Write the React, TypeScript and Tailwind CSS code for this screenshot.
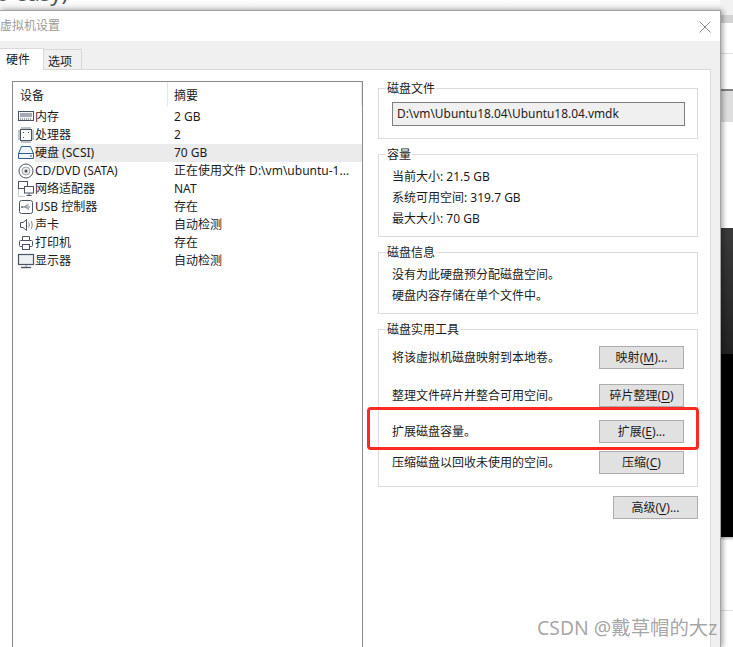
import React from 'react';

const stroke = '#4a5563';

const icons: Record<string, React.ReactNode> = {
  memory: (
    <>
      <rect x="1.5" y="3.5" width="15" height="9" fill="#f4f4f4" stroke={stroke} />
      <path d="M3 6h12M3 8h12" stroke="#8a93a0" strokeWidth="1.4" />
      <path d="M3 11h12" stroke={stroke} strokeDasharray="1 1" />
    </>
  ),
  cpu: (
    <>
      <rect x="3.5" y="3.5" width="11" height="11" fill="#fff" stroke={stroke} />
      <path d="M1 5h2M1 7h2M1 9h2M1 11h2M1 13h2M15 5h2M15 7h2M15 9h2M15 11h2M15 13h2M5 1v2M7 1v2M9 1v2M11 1v2M13 1v2M5 15v2M7 15v2M9 15v2M11 15v2M13 15v2" stroke="#7d8794" />
      <path d="M6 6h1v1H6zM11 6h1v1h-1zM6 11h1v1H6z" fill={stroke} />
    </>
  ),
  disk: (
    <>
      <path d="M4.5 2.5h9l3 7v5h-15v-5z" fill="#eef6fc" stroke="#2f5f8a" />
      <path d="M1.5 9.5h15" stroke="#2f5f8a" />
      <path d="M13 12h2" stroke="#2f5f8a" />
    </>
  ),
  cd: (
    <>
      <circle cx="9" cy="9" r="7" fill="#fff" stroke={stroke} />
      <circle cx="9" cy="9" r="4" fill="#e8e8e8" stroke="#a0a7b0" />
      <circle cx="9" cy="9" r="1.5" fill={stroke} />
    </>
  ),
  network: (
    <>
      <path d="M1.5 9.5v7h7" fill="none" stroke="#8a93a0" strokeDasharray="1 1" />
      <rect x="1.5" y="1.5" width="9" height="7" fill="#fff" stroke={stroke} />
      <rect x="7.5" y="6.5" width="9" height="6.5" fill="#fff" stroke={stroke} />
      <path d="M12 13v2M9.5 15.5h5" stroke={stroke} />
    </>
  ),
  usb: (
    <>
      <rect x="2.5" y="2.5" width="13" height="13" rx="2" fill="#fff" stroke={stroke} />
      <path d="M5 9h8M7.5 9l2-2h2M8.5 9l2 2h1.5" fill="none" stroke="#6b7582" />
      <circle cx="5" cy="9" r="1" fill="#6b7582" />
    </>
  ),
  sound: (
    <>
      <path d="M3.5 6.5h2.5l3.5-3v11l-3.5-3H3.5z" fill="#fff" stroke={stroke} />
      <path d="M11.5 6.5c1 1.5 1 3.5 0 5M14 5c1.6 2.5 1.6 5.5 0 8" fill="none" stroke="#7d8794" />
    </>
  ),
  printer: (
    <>
      <path d="M5.5 6.5v-4h7v4" fill="#fff" stroke={stroke} />
      <rect x="2.5" y="6.5" width="13" height="6" rx="1" fill="#fff" stroke={stroke} />
      <rect x="5.5" y="10.5" width="7" height="5" fill="#fff" stroke={stroke} />
    </>
  ),
  monitor: (
    <>
      <rect x="1.5" y="2.5" width="15" height="10" fill="#eef1f4" stroke={stroke} strokeWidth="1.2" />
      <path d="M4 15.5h10" stroke={stroke} strokeWidth="1.4" />
      <path d="M9 13v2" stroke="#8a93a0" />
    </>
  ),
};

const devices = [
  { icon: 'memory', name: '内存', value: '2 GB' },
  { icon: 'cpu', name: '处理器', value: '2' },
  { icon: 'disk', name: '硬盘 (SCSI)', value: '70 GB', selected: true },
  { icon: 'cd', name: 'CD/DVD (SATA)', value: '正在使用文件 D:\\vm\\ubuntu-1...' },
  { icon: 'network', name: '网络适配器', value: 'NAT' },
  { icon: 'usb', name: 'USB 控制器', value: '存在' },
  { icon: 'sound', name: '声卡', value: '自动检测' },
  { icon: 'printer', name: '打印机', value: '存在' },
  { icon: 'monitor', name: '显示器', value: '自动检测' },
];

const Group: React.FC<{ title: string; className: string; children: React.ReactNode }> = ({ title, className, children }) => (
  <div className={`relative border border-[#dcdcdc] ${className}`}>
    <span className="absolute left-[7px] -top-[9px] bg-white px-[1px] leading-[18px]">{title}</span>
    {children}
  </div>
);

const Button: React.FC<{ label: string; hotkey: string; tail: string }> = ({ label, hotkey, tail }) => (
  <button className="w-[85px] h-[23px] shrink-0 border border-[#adadad] bg-[#e1e1e1] text-center leading-[20px]">
    {label}(<span className="underline underline-offset-2">{hotkey}</span>){tail}
  </button>
);

const toolRows = [
  { text: '将该虚拟机磁盘映射到本地卷。', label: '映射', hotkey: 'M', tail: '...', margin: 'mt-[16px]' },
  { text: '整理文件碎片并整合可用空间。', label: '碎片整理', hotkey: 'D', tail: '', margin: 'mt-[15px]' },
  { text: '扩展磁盘容量。', label: '扩展', hotkey: 'E', tail: '...', margin: 'mt-[13px]' },
  { text: '压缩磁盘以回收未使用的空间。', label: '压缩', hotkey: 'C', tail: '', margin: 'mt-[8px]' },
];

const App: React.FC = () => {
  return (
    <div className="relative w-[733px] h-[647px] overflow-hidden bg-white text-[12px] text-[#1c1c1c] font-['Noto_Sans','Noto_Sans_CJK_SC',sans-serif]">
      {/* what is left of the page behind the dialog */}
      <div className="absolute inset-x-0 top-0 h-[10px] bg-gradient-to-b from-white to-[#ececec] overflow-hidden">
        <span className="absolute left-[-4px] top-[-21px] text-[22px] leading-[26px] text-[#555]">o easy)</span>
      </div>
      <div className="absolute left-[720px] top-0 w-[13px] h-[647px] flex flex-col">
        <div className="h-[15px] bg-[#f2f2f2]" />
        <div className="h-[8px] bg-[#d4d4d4]" />
        <div className="h-[31px] border-b border-[#e2e2e2]" />
        <div className="h-[37px] border-b-2 border-[#808080]" />
        <div className="h-[31px] bg-[#dedede]" />
        <div className="h-[106px]" />
        <div className="h-[126px] bg-gradient-to-b from-[#3a3a3a] to-[#222]" />
        <div className="h-[183px] bg-black" />
        <div className="h-[74px] border-b border-[#e2e2e2] bg-gradient-to-b from-[#bbb] from-0% to-white to-[5%]" />
      </div>

      {/* dialog */}
      <div className="absolute left-0 top-[10px] w-[721px] h-[637px] flex flex-col border-t border-r border-[#a3a3a3] bg-[#f0f0f0] shadow-[2px_0_5px_rgba(0,0,0,0.35)]">
        <div className="h-[30px] shrink-0 bg-white flex items-center justify-between">
          <span className="text-[#9a9a9a] text-[12px] leading-[16px]">虚拟机设置</span>
          <svg width="12" height="12" viewBox="0 0 12 12" className="mr-[9px] mt-[1px]">
            <path d="M.5.5l11 11M11.5.5l-11 11" stroke="#8c8c8c" strokeWidth="1" />
          </svg>
        </div>

        <div className="h-[28px] shrink-0 flex items-end relative z-10">
          <div className="w-[44px] h-[22px] -mb-[1px] bg-white border-t border-r border-[#d9d9d9] pl-[6px] leading-[22px] text-[12px]">硬件</div>
          <div className="w-[38px] h-[20px] bg-[#f0f0f0] border-t border-r border-[#d9d9d9] pl-[4px] leading-[23px]">选项</div>
        </div>

        <div className="w-[711px] flex-1 min-h-0 bg-white border-t border-r border-[#d9d9d9] flex gap-[15px] pl-[12px] pt-[11px] overflow-hidden">
          {/* device list */}
          <div className="w-[351px] h-[600px] shrink-0 border border-[#8a8a94]">
            <div className="h-[26px] flex items-start">
              <div className="w-[155px] h-[24px] pl-[7px] leading-[28px] border-r border-[#e6e6e6]">设备</div>
              <div className="flex-1 h-[24px] pl-[6px] leading-[28px] border-r border-[#e6e6e6]">摘要</div>
            </div>
            {devices.map(d => (
              <div key={d.name} className="h-[18px] flex items-center leading-[18px]">
                <div className="w-[155px] flex items-center pl-[4px] h-full">
                  <svg width="18" height="18" viewBox="0 0 18 18" className="shrink-0">
                    {icons[d.icon]}
                  </svg>
                  <span className={`flex-1 h-full ${d.selected ? 'bg-[#ebebeb]' : ''}`}>{d.name}</span>
                </div>
                <div className={`flex-1 h-full pl-[6px] whitespace-nowrap ${d.selected ? 'bg-[#ebebeb]' : ''}`}>{d.value}</div>
              </div>
            ))}
          </div>

          {/* details */}
          <div className="w-[320px] shrink-0 pt-[7px] flex flex-col">
            <Group title="磁盘文件" className="h-[51px]">
              <div className="mt-[13px] ml-[13px] w-[293px] h-[24px] border border-[#808080] bg-[#f0f0f0] pl-[4px] leading-[20px] text-[11.9px]">
                D:\vm\Ubuntu18.04\Ubuntu18.04.vmdk
              </div>
            </Group>
            <Group title="容量" className="h-[83px] mt-[15px] pl-[13px] pt-[11px] leading-[21px]">
              <div>当前大小: 21.5 GB</div>
              <div>系统可用空间: 319.7 GB</div>
              <div>最大大小: 70 GB</div>
            </Group>
            <Group title="磁盘信息" className="h-[62px] mt-[15px] pl-[13px] pt-[11px] leading-[21px]">
              <div>没有为此硬盘预分配磁盘空间。</div>
              <div>硬盘内容存储在单个文件中。</div>
            </Group>
            <Group title="磁盘实用工具" className="h-[158px] mt-[15px] pl-[13px] pr-[13px]">
              {toolRows.map(r => (
                <div key={r.hotkey} className={`flex items-center justify-between ${r.margin}`}>
                  <span>{r.text}</span>
                  <Button label={r.label} hotkey={r.hotkey} tail={r.tail} />
                </div>
              ))}
            </Group>
            <div className="mt-[9px] flex justify-end">
              <Button label="高级" hotkey="V" tail="..." />
            </div>
          </div>
        </div>
      </div>

      {/* red annotation and watermark lie over the dialog */}
      <div className="absolute left-[367px] top-[407px] w-[332px] h-[43px] border-[3px] border-[#ff2a1f] rounded-[4px]" />
      <div className="absolute left-[537px] top-[616px] text-[19.4px] leading-[24px] whitespace-nowrap text-[#8f8f8f]/80">CSDN @戴草帽的大z</div>
    </div>
  );
};

export default App;
